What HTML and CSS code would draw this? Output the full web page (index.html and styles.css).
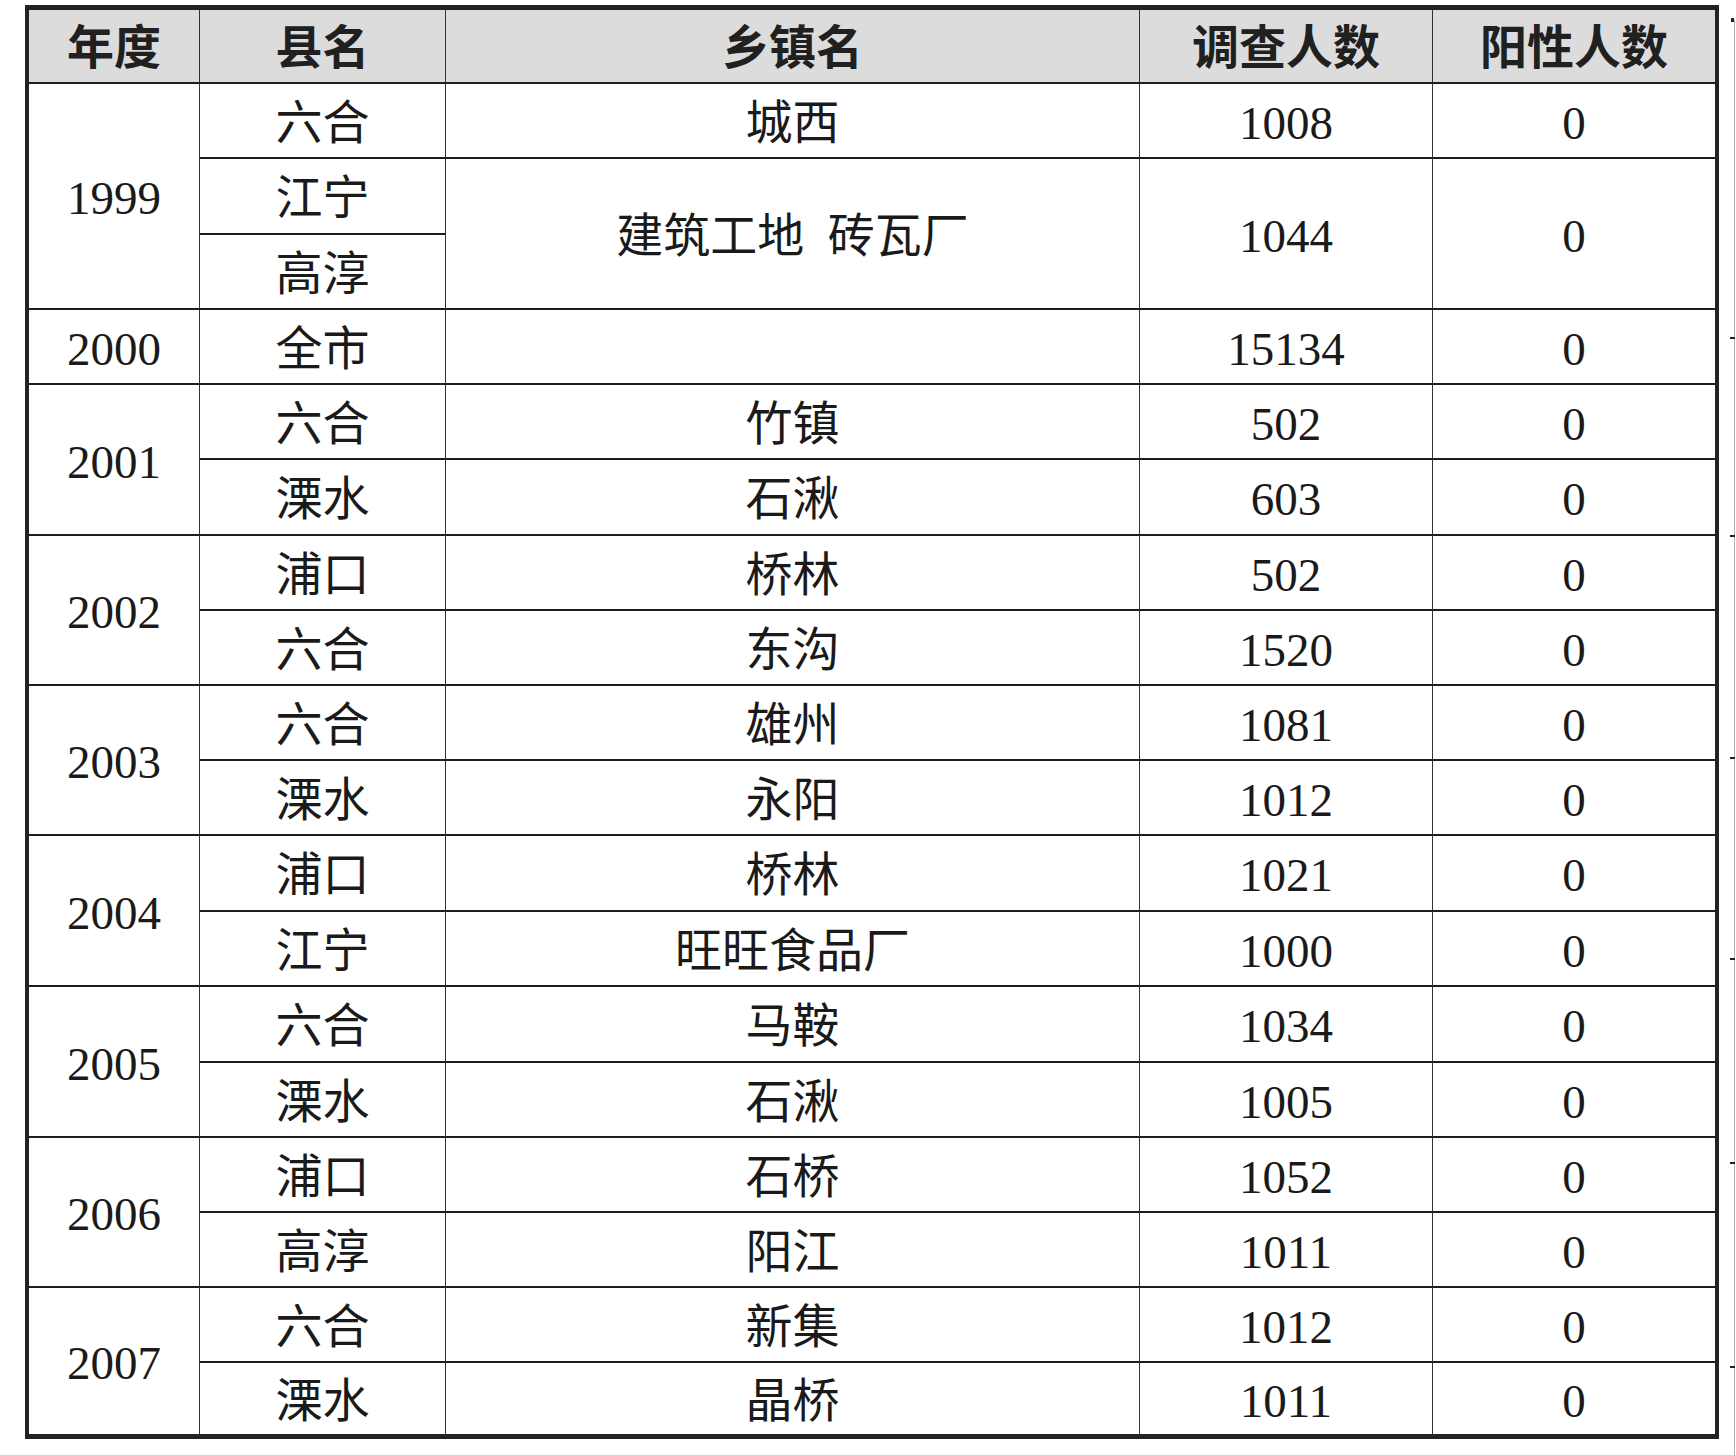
FILE: index.html
```html
<!DOCTYPE html>
<html lang="zh-CN">
<head>
<meta charset="utf-8">
<title>调查表</title>
<link rel="stylesheet" href="styles.css">
</head>
<body>
<div class="page">
  <div class="sheet">
    <div class="cell head">年度</div>
    <div class="cell head">县名</div>
    <div class="cell head">乡镇名</div>
    <div class="cell head">调查人数</div>
    <div class="cell head end">阳性人数</div>

    <div class="cell span3">1999</div>
    <div class="cell">六合</div>
    <div class="cell">城西</div>
    <div class="cell">1008</div>
    <div class="cell end">0</div>
    <div class="cell">江宁</div>
    <div class="cell span2">建筑工地&ensp;砖瓦厂</div>
    <div class="cell span2">1044</div>
    <div class="cell span2 end">0</div>
    <div class="cell">高淳</div>

    <div class="cell">2000</div>
    <div class="cell">全市</div>
    <div class="cell"></div>
    <div class="cell">15134</div>
    <div class="cell end">0</div>

    <div class="cell span2">2001</div>
    <div class="cell">六合</div>
    <div class="cell">竹镇</div>
    <div class="cell">502</div>
    <div class="cell end">0</div>
    <div class="cell">溧水</div>
    <div class="cell">石湫</div>
    <div class="cell">603</div>
    <div class="cell end">0</div>

    <div class="cell span2">2002</div>
    <div class="cell">浦口</div>
    <div class="cell">桥林</div>
    <div class="cell">502</div>
    <div class="cell end">0</div>
    <div class="cell">六合</div>
    <div class="cell">东沟</div>
    <div class="cell">1520</div>
    <div class="cell end">0</div>

    <div class="cell span2">2003</div>
    <div class="cell">六合</div>
    <div class="cell">雄州</div>
    <div class="cell">1081</div>
    <div class="cell end">0</div>
    <div class="cell">溧水</div>
    <div class="cell">永阳</div>
    <div class="cell">1012</div>
    <div class="cell end">0</div>

    <div class="cell span2">2004</div>
    <div class="cell">浦口</div>
    <div class="cell">桥林</div>
    <div class="cell">1021</div>
    <div class="cell end">0</div>
    <div class="cell">江宁</div>
    <div class="cell">旺旺食品厂</div>
    <div class="cell">1000</div>
    <div class="cell end">0</div>

    <div class="cell span2">2005</div>
    <div class="cell">六合</div>
    <div class="cell">马鞍</div>
    <div class="cell">1034</div>
    <div class="cell end">0</div>
    <div class="cell">溧水</div>
    <div class="cell">石湫</div>
    <div class="cell">1005</div>
    <div class="cell end">0</div>

    <div class="cell span2">2006</div>
    <div class="cell">浦口</div>
    <div class="cell">石桥</div>
    <div class="cell">1052</div>
    <div class="cell end">0</div>
    <div class="cell">高淳</div>
    <div class="cell">阳江</div>
    <div class="cell">1011</div>
    <div class="cell end">0</div>

    <div class="cell span2 last">2007</div>
    <div class="cell">六合</div>
    <div class="cell">新集</div>
    <div class="cell">1012</div>
    <div class="cell end">0</div>
    <div class="cell last">溧水</div>
    <div class="cell last">晶桥</div>
    <div class="cell last">1011</div>
    <div class="cell end last">0</div>
  </div>

  <div class="edge"></div>
  <div class="mark"></div>
  <div class="tick t1"></div>
  <div class="tick t2"></div>
  <div class="tick t3"></div>
  <div class="tick t4"></div>
  <div class="tick t5"></div>
  <div class="tick t6"></div>
</div>
</body>
</html>
```

FILE: styles.css
```css
html, body {
  margin: 0;
  padding: 0;
  background: #ffffff;
}

.page {
  position: relative;
  width: 1736px;
  height: 1455px;
  box-sizing: border-box;
  padding: 5px 0 0 25px;
  overflow: hidden;
}

.sheet {
  display: grid;
  grid-template-columns: 171px 246px 694px 293px 282px;
  grid-template-rows: 74px 75px 76px 75px 75px 75px 76px 75px 75px 75px 75px 76px 75px 76px 75px 75px 75px 75px 71px;
  width: fit-content;
  border-style: solid;
  border-color: #222222;
  border-width: 5px 4px 5px 4px;
}

.cell {
  box-sizing: border-box;
  display: flex;
  align-items: center;
  justify-content: center;
  padding-top: 5px;
  border-right: 1px solid #333333;
  border-bottom: 2px solid #1e1e1e;
  font-family: "Liberation Serif", "Noto Sans CJK SC", serif;
  font-size: 47px;
  line-height: 1.2;
  color: #1a1a1a;
  white-space: nowrap;
}

.cell.end {
  border-right: none;
}

.cell.last {
  border-bottom: none;
}

.span2 {
  grid-row: span 2;
}

.span3 {
  grid-row: span 3;
}

.head {
  padding-top: 0;
  padding-bottom: 4px;
  background: #dcdcdc;
  font-family: "Noto Sans CJK SC", sans-serif;
  font-weight: 700;
  color: #202020;
}

/* scanned page edge on the right */
.edge {
  position: absolute;
  left: 1734px;
  top: 20px;
  bottom: 0;
  width: 1px;
  background: #b0b0b0;
}

.mark {
  position: absolute;
  left: 1731px;
  top: 18px;
  width: 3px;
  height: 4px;
  background: #222222;
}

.tick {
  position: absolute;
  left: 1730px;
  width: 5px;
  height: 2px;
  background: #222222;
}

.t1 { top: 337px; }
.t2 { top: 535px; }
.t3 { top: 757px; }
.t4 { top: 958px; }
.t5 { top: 1162px; }
.t6 { top: 1366px; }
```
